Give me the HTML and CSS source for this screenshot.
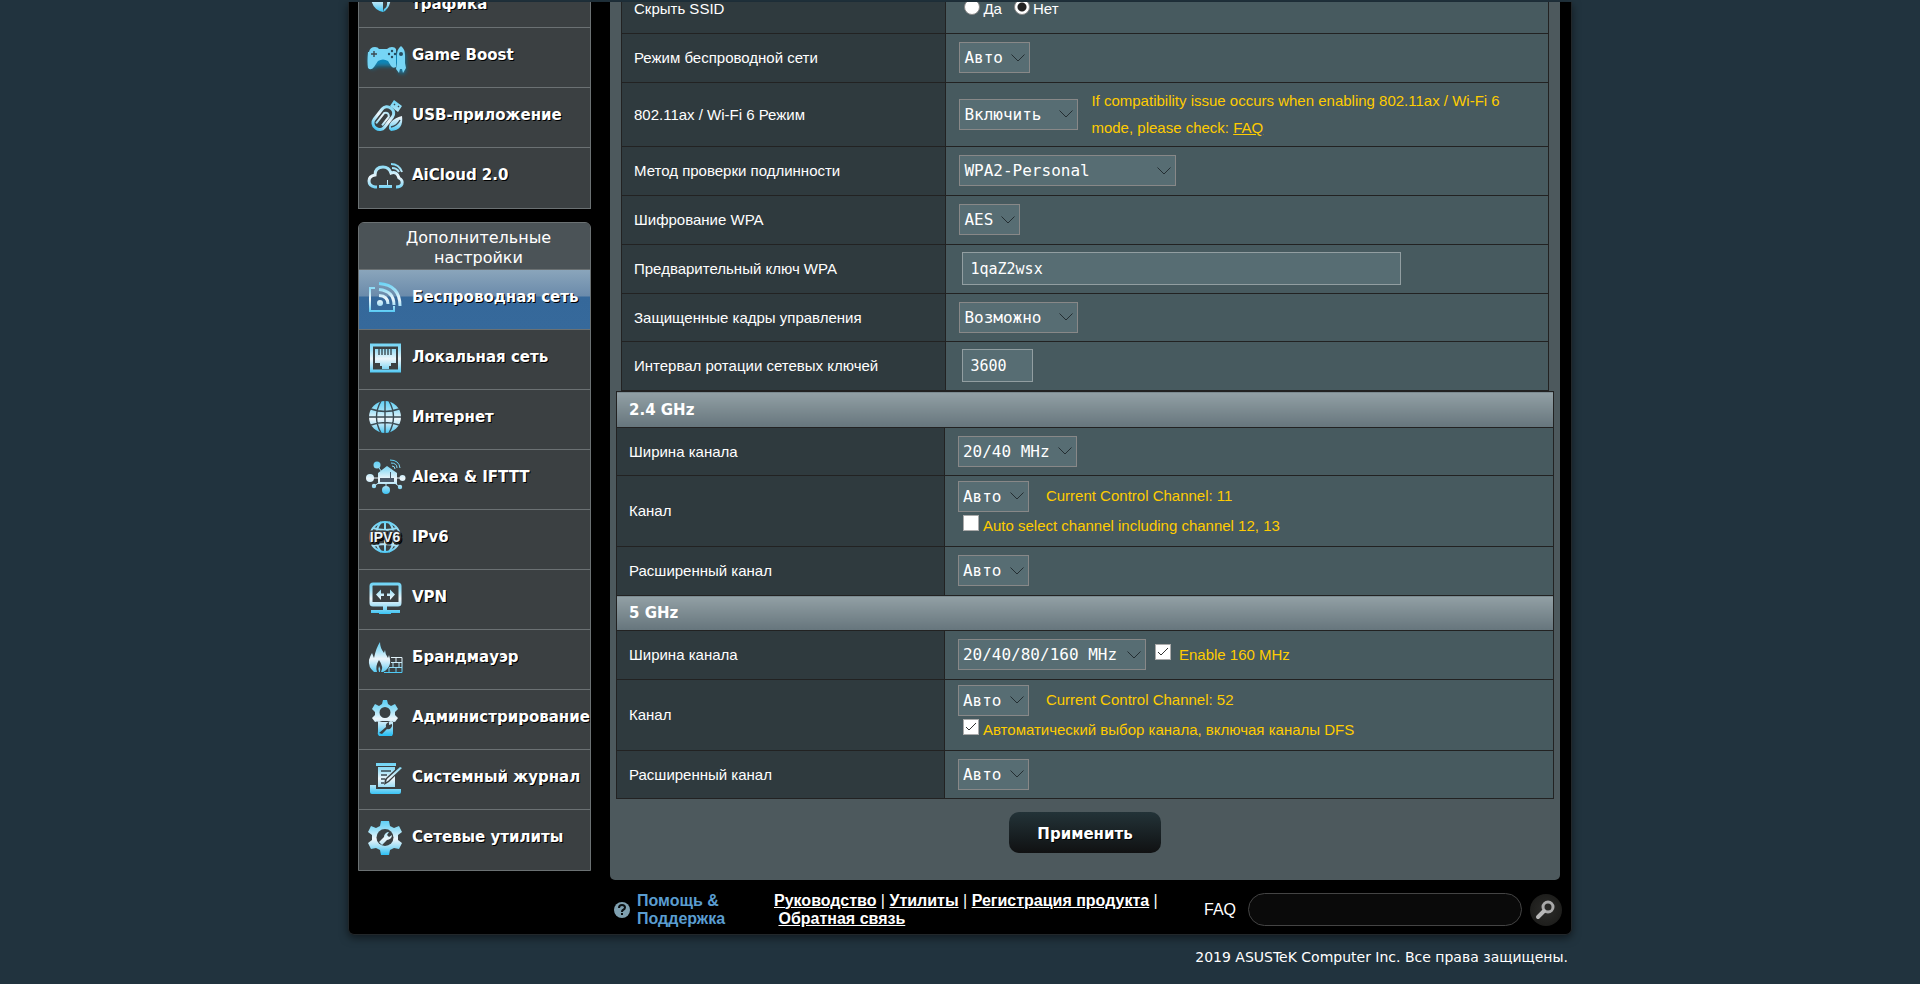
FILE: index.html
```html
<!DOCTYPE html>
<html lang="ru">
<head>
<meta charset="utf-8">
<title>Беспроводная сеть</title>
<link rel="stylesheet" href="styles.css">
</head>
<body>
<svg class="defs" aria-hidden="true">
  <defs>
    <linearGradient id="ice" x1="0" y1="0" x2="0" y2="36" gradientUnits="userSpaceOnUse">
      <stop offset="0" stop-color="#52cdf6"/><stop offset=".3" stop-color="#9adff6"/>
      <stop offset=".55" stop-color="#eef6fb"/><stop offset=".75" stop-color="#a5e0f6"/><stop offset="1" stop-color="#2cc0f4"/>
    </linearGradient>
    <filter id="glow" x="-30%" y="-30%" width="160%" height="160%"><feGaussianBlur stdDeviation="2"/></filter>
  </defs>
</svg>
<div class="page">
  <div class="columns">
    <nav class="sidebar">
      <ul class="menu menu-general">
        <li><a href="#"><svg class="icon" viewBox="0 0 36 36"><path class="f" d="M4 22h12v13Q6 33 4 22zM19 20h5q-1 12-8 15l1-3q5-3 2-12z"/></svg>Анализатор<br>трафика</a></li>
        <li><a href="#"><svg class="icon" viewBox="0 0 36 36"><path filter="url(#glow)" fill="#0d86b8" d="M2 16h36v20h-6V29H10L5 32Q1 30 2 16z"/><path fill="#76d5f5" d="M2 15Q3 10 8 10q3 0 4 2h8q2-2 5-2 3 0 4 2v18q-3 2-5-1l-3-5q-5-3-10 0l-4 6q-3 4-6 1-1-6 0-16zM34 9q4 3 4 9v8l1 5-3 5-1-4h-2l-1 4-3-4 1-6v-8q0-6 4-9z"/><path class="k" d="M4 17h6M7 14v6"/><g fill="#274d60"><circle cx="25" cy="14" r="1.2"/><circle cx="22" cy="17" r="1.2"/><circle cx="28" cy="17" r="1.2"/><circle cx="25" cy="20" r="1.2"/><circle cx="34" cy="17" r="2"/></g></svg>Game Boost</a></li>
        <li><a href="#"><svg class="icon" viewBox="0 0 36 36"><g transform="rotate(38 15 22)"><rect class="s3" x="9" y="8" width="13" height="25" rx="6"/><path class="s2" d="M13 29V16q3-4 6 0v11"/></g><path class="f" d="M27 3l8 6-4 6-8-6zM22 32q-1-9 13-13 2 14-11 15z"/><path class="k" d="M27 7l1 1M31 9l1 1M24 30q6-1 9-7"/></svg>USB-приложение</a></li>
        <li><a href="#"><svg class="icon" viewBox="0 0 36 36"><path class="s3" d="M10 30H8Q2 29 2 24q0-5 6-6 0-8 8-8 6 0 8 6 6-2 8 5 4 2 3 6-1 3-6 3"/><path class="s2" d="M24 7q8 0 11 8M25 11q5 0 7 4"/><path class="f" d="M12 28h8v-5h1v5h4v3H12z"/></svg>AiCloud 2.0</a></li>
      </ul>
      <div class="menu menu-advanced">
        <h2>Дополнительные настройки</h2>
        <ul>
        <li class="active"><a href="#"><svg class="icon" viewBox="0 0 36 36"><path class="s2" d="M8 9H3v23h24v-5"/><circle class="f" cx="13" cy="24" r="3"/><path class="s3" d="M12 4.500Q33 6 33 27M12 10.500Q27 12 27 26M12 16.500Q21 17 21 25"/></svg>Беспроводная сеть</a></li>
        <li><a href="#"><svg class="icon" viewBox="0 0 36 36"><rect class="s3" x="4.500" y="6" width="28" height="26"/><path class="f" d="M8 10h21v14h-5v3h-2v3h-7v-3h-2v-3H8z"/><path class="k" d="M12 10v6M15 10v6M18 10v6M21 10v6M24 10v6"/></svg>Локальная сеть</a></li>
        <li><a href="#"><svg class="icon" viewBox="0 0 36 36"><circle class="f" cx="18" cy="18" r="16"/><path class="k" d="M18 2v32M2 18h32M4 10q14 5 28 0M4 26q14-5 28 0M14 2q-9 16 0 32M22 2q9 16 0 32"/></svg>Интернет</a></li>
        <li><a href="#"><svg class="icon" viewBox="0 0 36 36"><path class="s1" d="M3 19h31M10 6l9 13M19 31V19M7 27l12-8M33 28l-12-9"/><path class="f" d="M11 14l9-7 10 7v11H11z"/><g class="f"><circle cx="3" cy="19" r="4"/><circle cx="10" cy="6" r="3.500"/><circle cx="35.500" cy="19" r="3"/><circle cx="19" cy="31" r="4"/><circle cx="7" cy="27" r="2.200"/><circle cx="33" cy="28" r="2.200"/></g><path fill="#4b5968" d="M13 19h10v-6h1v6h3v4H13z"/><path class="s1" d="M23 1q9 0 10 8M24 4q6 0 6 5M25 7q3 0 3 3"/></svg>Alexa &amp; IFTTT</a></li>
        <li><a href="#"><svg class="icon" viewBox="0 0 36 36"><circle class="s2" cx="18" cy="18" r="15"/><path class="s2" d="M18 3v30M6 9q12 4 24 0M6 27q12-4 24 0M14 3q-5 6-5 15t5 15M22 3q5 6 5 15t-5 15"/><text class="ipv" x="18" y="23" text-anchor="middle">IPV6</text></svg>IPv6</a></li>
        <li><a href="#"><svg class="icon" viewBox="0 0 36 36"><rect class="s3" x="4" y="5" width="29" height="21" rx="2"/><path class="f" d="M4 23h29v3H4zM16 26h4v5h13v3h-9v1H12v-1H4v-3h12zM9 15.500l5-5v4h3v2.500h-3v4zM28 15.500l-5-5v4h-3v2.500h3v4z"/></svg>VPN</a></li>
        <li><a href="#"><svg class="icon" viewBox="0 0 36 36"><path class="f" d="M7 33Q1 28 2 21q1-4 3-7l2 5Q9 9 13 3q0 6 4 11l1-3q0 4 3 8l1-3q4 12-6 17z"/><path fill="#3b4042" d="M10 33q-2-6 2-12 5 7 2 12z"/><path class="f" d="M12 33q-1-4 0-6 2 3 1 6z"/><path class="s1" d="M24 18.500h11v15H17M24 23.500h11M22 28.500h13M29 18v5M32 24v5M26 24v5M29 29v5M22 29v5"/></svg>Брандмауэр</a></li>
        <li><a href="#"><svg class="icon" viewBox="0 0 36 36"><path class="f" fill-rule="evenodd" d="M16 1h4l1 4 3 2 4-2 3 5-3 3v3l3 3-3 4-4-1-3 1h-6l-3-1-4 1-3-4 3-3v-3l-3-3 3-5 4 2 3-2zM18 8a5 5 0 1 0 0 11 5 5 0 1 0 0-11zM11 22h15v13l-1 2H12q-2-2-1-5z"/><path class="kw" d="M12 34l7-6a4 4 0 0 1 3-5v3l3-1a4 4 0 0 1-5 5l-5 5z"/></svg>Администрирование</a></li>
        <li><a href="#"><svg class="icon" viewBox="0 0 36 36"><path class="f" d="M9 4h20v3H9zM11 8h17v20H11zM3 26h6v4h25v3q0 2-2 2H5q-2 0-2-2z"/><path class="k" d="M14 12h10M14 16h6M14 20h4M14 24h3"/><path class="kw" d="M33 6l3 3-14 14-5 3 1-6z"/><path class="f" d="M33 8l2 1-14 13-2 1 1-3z"/></svg>Системный журнал</a></li>
        <li><a href="#"><svg class="icon" viewBox="0 0 36 36"><path class="f" d="M14 2h8l1 5 4 2 5-2 3 6-4 3v5l4 3-3 6-5-1-4 2-1 5h-8l-1-5-4-2-5 1-3-6 4-3v-5l-4-3 3-6 5 2 4-2z"/><circle cx="18" cy="18.500" r="8.500" fill="#3b4042"/><path class="f" d="M12 23l5-5a5 5 0 0 1 5-5l-2 3 2 2 3-2a5 5 0 0 1-5 5l-5 5z"/></svg>Сетевые утилиты</a></li>
        </ul>
      </div>
    </nav>

    <main class="panel">
      <table class="form form-main">
        <tr><th>Скрыть SSID</th><td><div class="field radios"><label><input type="radio" name="hide">Да</label><label><input type="radio" name="hide" checked>Нет</label></div></td></tr>
        <tr><th><label for="mode">Режим беспроводной сети</label></th><td><select id="mode" class="w-s"><option>Авто</option></select></td></tr>
        <tr class="h-note"><th><label for="ax">802.11ax / Wi-Fi 6 Режим</label></th><td><div class="field"><select id="ax" class="w-m"><option>Включить</option></select><p class="note">If compatibility issue occurs when enabling 802.11ax / Wi-Fi 6 mode, please check: <a href="#">FAQ</a></p></div></td></tr>
        <tr><th><label for="auth">Метод проверки подлинности</label></th><td><select id="auth" class="w-xl"><option>WPA2-Personal</option></select></td></tr>
        <tr><th><label for="enc">Шифрование WPA</label></th><td><select id="enc" class="w-xs"><option>AES</option></select></td></tr>
        <tr><th><label for="key">Предварительный ключ WPA</label></th><td><input id="key" class="text text-long" type="text" value="1qaZ2wsx"></td></tr>
        <tr class="h-48"><th><label for="pmf">Защищенные кадры управления</label></th><td><select id="pmf" class="w-m"><option>Возможно</option></select></td></tr>
        <tr><th><label for="rot">Интервал ротации сетевых ключей</label></th><td><input id="rot" class="text text-short" type="text" value="3600"></td></tr>
      </table>
      <table class="form form-band">
        <colgroup><col class="col-label"><col></colgroup>
        <tr class="band band-first"><th colspan="2">2.4 GHz</th></tr>
        <tr class="h-48"><th><label for="w24">Ширина канала</label></th><td><select id="w24" class="w-m"><option>20/40 MHz</option></select></td></tr>
        <tr class="h-two"><th><label for="c24">Канал</label></th><td><div class="field channel"><select id="c24" class="w-s"><option>Авто</option></select><span>Current Control Channel: 11</span></div><label class="check"><input type="checkbox">Auto select channel including channel 12, 13</label></td></tr>
        <tr><th><label for="e24">Расширенный канал</label></th><td><select id="e24" class="w-s"><option>Авто</option></select></td></tr>
        <tr class="band"><th colspan="2">5 GHz</th></tr>
        <tr><th><label for="w5">Ширина канала</label></th><td><div class="field"><select id="w5" class="w-l"><option>20/40/80/160 MHz</option></select><label class="check check-side"><input type="checkbox" checked>Enable 160 MHz</label></div></td></tr>
        <tr class="h-two"><th><label for="c5">Канал</label></th><td><div class="field channel"><select id="c5" class="w-s"><option>Авто</option></select><span>Current Control Channel: 52</span></div><label class="check"><input type="checkbox" checked>Автоматический выбор канала, включая каналы DFS</label></td></tr>
        <tr class="h-48"><th><label for="e5">Расширенный канал</label></th><td><select id="e5" class="w-s"><option>Авто</option></select></td></tr>
      </table>
      <button class="apply" type="button">Применить</button>
    </main>
  </div>

  <footer class="footer">
    <svg class="help-icon" viewBox="0 0 18 18"><circle cx="9" cy="9" r="8" fill="#7fa0b0"/><path d="M6 7q0-3 3-3t3 2.500q0 1.500-2 2.500-1 .5-1 2" fill="none" stroke="#0a0f12" stroke-width="2"/><rect x="8" y="12" width="2" height="2" fill="#0a0f12"/></svg>
    <a class="help" href="#">Помощь &amp; Поддержка</a>
    <p class="links"><a href="#">Руководство</a> | <a href="#">Утилиты</a> | <a href="#">Регистрация продукта</a> | <br>&nbsp;<a href="#">Обратная связь</a></p>
    <label class="faq" for="faq">FAQ</label>
    <input id="faq" class="search" type="text">
    <button class="go" type="button" aria-label="Поиск"><svg viewBox="0 0 32 32"><circle cx="18" cy="13" r="5" fill="none" stroke="#a9a9a9" stroke-width="3"/><path d="M14 17l-6 6" stroke="#b8b8b8" stroke-width="4" stroke-linecap="round"/></svg></button>
  </footer>
</div>
<p class="copyright">2019 ASUSTeK Computer Inc. Все права защищены.</p>
</body>
</html>
```
FILE: styles.css
```css
* { box-sizing: border-box; }
body {
  margin: 0;
  padding-top: 2px;
  background: #21333e;
  color: #fff;
  font: 15px/20px "Liberation Sans", Arial, sans-serif;
}
.defs { position: absolute; width: 0; height: 0; }
.page {
  max-width: 1224px;
  margin: 0 auto;
  padding: 0 11px 0 9px;
  background: #000;
  border: 1px solid #22272a;
  border-top: 0;
  border-radius: 0 0 6px 6px;
  box-shadow: 0 3px 8px rgba(0, 0, 0, .5);
}
.columns { display: flex; gap: 19px; align-items: flex-start; overflow: hidden; }

/* sidebar */
.sidebar { flex: 0 0 233px; margin-top: -35px; }
.menu, .menu ul { margin: 0; padding: 0; list-style: none; }
.menu { border: 1px solid #6b7173; overflow: hidden; background: #3b4042; }
.menu-general { border-top: 0; }
.menu li { height: 60px; border-top: 1px solid #6b7173; }
.menu li:last-child { height: 61px; }
.menu-advanced { margin-top: 13px; border-radius: 6px 6px 0 0; }
.menu h2 {
  margin: 0;
  padding: 5px 26px 1px 34px;
  background: #4b5357;
  font: 16px/20px "DejaVu Sans", Verdana, sans-serif;
  text-align: center;
}
.menu a {
  display: flex;
  align-items: center;
  gap: 9px;
  height: 54px;
  padding-left: 8px;
  color: #fff;
  font: bold 15px/18px "DejaVu Sans", Verdana, sans-serif;
  text-decoration: none;
  white-space: nowrap;
  text-shadow: 1px 1px 0 #000;
}
.menu .active {
  background: linear-gradient(#8aa5bb 0, #6b8bab 26px, #35689a 27px, #36699b 100%);
}
.icon { flex: 0 0 36px; height: 36px; overflow: visible; }
.f { fill: url(#ice); }
.s1, .s2, .s3 { fill: none; stroke: url(#ice); stroke-width: 1; }
.s2 { stroke-width: 2; }
.s3 { stroke-width: 3; }
.k { fill: none; stroke: #3b4a52; stroke-width: 1.4; }
.kw { fill: #3b4042; }
.ipv {
  font: bold 14px "Liberation Sans", Arial, sans-serif;
  fill: #eef6fb;
  stroke: #3b4042;
  stroke-width: 3;
  paint-order: stroke;
}

/* settings panel */
.panel {
  flex: 1;
  margin-top: -18px;
  padding: 0 6px 27px;
  background: #4d595d;
  border-radius: 0 0 5px 5px;
}
.form { border-collapse: collapse; width: 100%; table-layout: fixed; }
.form-main { width: auto; min-width: calc(100% - 10px); margin: 0 5px; }
.form th, .form td {
  height: 49px;
  padding: 0 12px;
  border: 1px solid #222;
  text-align: left;
  font-weight: normal;
}
.form th { background: #2f3a3e; }
.form-main th, .col-label { width: 35%; }
.form td { padding: 0 12px 1px 13px; background: #475a5f; }
.form .h-48 > * { height: 48px; }
.form .h-note > * { height: 64px; }
.form .h-two > * { height: 71px; }
.form .band th {
  height: 35px;
  background: linear-gradient(#92a0a5, #66757c);
  font: bold 15px/20px "DejaVu Sans", Verdana, sans-serif;
}
.form .band-first th { height: 36px; }
.form select, .form .text {
  color: #fff;
  background-color: #576d73;
  border: 1px solid #888;
  border-radius: 0;
  vertical-align: middle;
}
.form select {
  flex: none;
  appearance: none;
  height: 31px;
  padding: 0 0 0 4px;
  font: 16px "DejaVu Sans Mono", "Lucida Console", monospace;
  background-image: url("data:image/svg+xml,%3Csvg xmlns='http://www.w3.org/2000/svg' width='14' height='8'%3E%3Cpath d='M.5.5L7 7 13.500.5' fill='none' stroke='%23242e32'/%3E%3C/svg%3E");
  background-repeat: no-repeat;
  background-position: right 4px center;
}
.form .w-xs { width: 61px; }
.form .w-s { width: 71px; }
.form .w-m { width: 119px; }
.form .w-l { width: 188px; }
.form .w-xl { width: 217px; }
.form .text {
  height: 33px;
  margin-left: 3px;
  padding: 0 7px;
  border-color: #929ea1;
  font: 15px "DejaVu Sans Mono", "Lucida Console", monospace;
}
.form .text-long { width: 439px; }
.form .text-short { width: 71px; }
.field { display: flex; align-items: center; }
.note { max-width: 430px; margin: 0 0 0 13px; line-height: 27px; color: #fc0; }
.note a { color: inherit; }
.channel { color: #fc0; gap: 17px; }
.radios { gap: 7px; }
.radios label { display: flex; align-items: center; gap: 3px; }
.check { display: flex; align-items: center; gap: 4px; height: 29px; margin-left: 5px; color: #fc0; }
.check-side { gap: 8px; margin-left: 9px; }
.form input[type="checkbox"] {
  appearance: none;
  width: 16px;
  height: 16px;
  margin: 0 0 6px;
  border: 1px solid #aaa;
  background: #fff;
}
.form input[type="checkbox"]:checked {
  background: #fff url("data:image/svg+xml,%3Csvg xmlns='http://www.w3.org/2000/svg' width='12' height='10'%3E%3Cpath d='M1 5l3 3 7-7' fill='none' stroke='%23333'/%3E%3C/svg%3E") center no-repeat;
}
.form input[type="radio"] {
  appearance: none;
  width: 16px;
  height: 16px;
  margin: 0 0 3px 5px;
  border: 1px solid #888;
  border-radius: 50%;
  background: #fff;
}
.radios label + label input { margin-left: 0; }
.form input[type="radio"]:checked { background: radial-gradient(#222 4px, #fff 5px); }
.apply {
  display: block;
  width: 152px;
  height: 41px;
  margin: 13px auto 0;
  padding: 2px 0 0;
  border: 0;
  border-radius: 10px;
  background: linear-gradient(#233338, #101112);
  color: #fff;
  font: bold 15px "DejaVu Sans", Verdana, sans-serif;
  text-shadow: 1px 1px 0 #000;
}

/* footer */
.footer {
  display: flex;
  align-items: center;
  height: 54px;
  margin-right: -2px;
  padding: 5px 0 0 255px;
  font-size: 16px;
  line-height: 18px;
}
.help-icon { flex: 0 0 18px; height: 18px; }
.help { width: 143px; padding: 0 40px 0 6px; flex: none; color: #5a9dd0; font-weight: bold; text-decoration: none; }
.links { flex: 1; margin: 0; white-space: nowrap; }
.links a { color: #fff; font-weight: bold; }
.faq { margin-right: 12px; }
.search { width: 274px; height: 33px; padding: 0 14px; border: 1px solid #444; border-radius: 17px; background: #0a0a0a; color: #fff; }
.go { width: 32px; height: 32px; margin: 0 0 0 8px; padding: 0; border: 0; border-radius: 50%; background: radial-gradient(#2c2c2a, #181816); }
.go svg { display: block; }
.copyright {
  max-width: 1224px;
  margin: 12px auto 0;
  padding-right: 4px;
  text-align: right;
  font: 14px/20px "DejaVu Sans", Verdana, sans-serif;
}
```
